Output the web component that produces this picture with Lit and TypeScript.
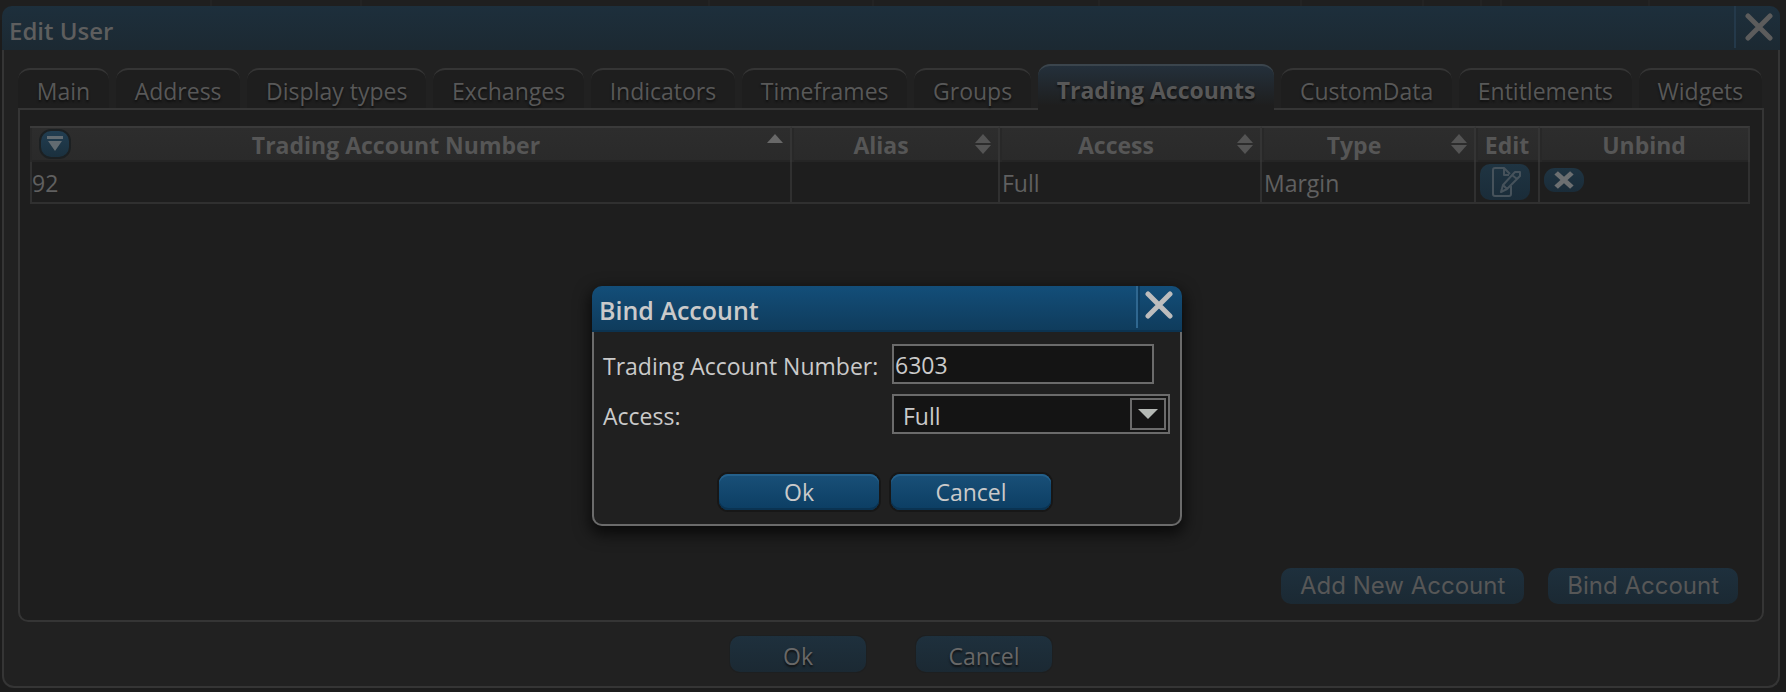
import { LitElement, html, css, svg, nothing } from "lit";
import { customElement, property, state } from "lit/decorators.js";
import { classMap } from "lit/directives/class-map.js";

const crossIcon = svg`<path d="M3 3 L25 25 M25 3 L3 25" fill="none" stroke="currentColor" stroke-width="5" stroke-linecap="round" />`;

@customElement("sort-mark")
class SortMark extends LitElement {
  static styles = css`
    :host { display: block; width: 16px; height: 20px; }
    svg { display: block; width: 16px; height: 20px; fill: #545454; }
    .on { fill: #686868; }
  `;
  @property() order = "";
  render() {
    return html`<svg viewBox="0 0 16 20" aria-hidden="true">
      ${this.order === "asc"
        ? svg`<path class="on" d="M8 0 L16 9 H0 Z" />`
        : svg`<path d="M8 0 L16 9 H0 Z" /><path d="M0 11 H16 L8 20 Z" />`}
    </svg>`;
  }
}

@customElement("account-table")
class AccountTable extends LitElement {
  static styles = css`
    :host { display: block; }
    * { box-sizing: border-box; }
    table { width: 100%; table-layout: fixed; border-collapse: separate; border-spacing: 0; }
    .alias { width: 208px; }
    .access { width: 262px; }
    .type { width: 214px; }
    .edit { width: 64px; }
    .unbind { width: 210px; }
    th {
      height: 36px; padding: 0; font-weight: 700; line-height: 34px; color: #565656;
      background: linear-gradient(#2d2d2d, #2a2a2a);
      border-top: 2px solid #3a3a3a; border-right: 2px solid #343434;
      box-shadow: inset 2px 0 #282828, inset 0 -2px #252525;
    }
    td {
      height: 42px; padding: 2px 2px 0; line-height: 38px; vertical-align: top; color: #606060;
      border-right: 2px solid #303030; border-bottom: 2px solid #303030;
    }
    td:first-child { border-left: 2px solid #303030; padding-left: 0; }
    .head { display: grid; align-items: start; justify-items: center; }
    .head > * { grid-area: 1 / 1; }
    .sortable { padding-right: 28px; }
    .plain { padding-right: 0; }
    .mark { justify-self: end; margin: 6px -21px 0 0; }
    button { display: block; padding: 0; border: 0; }
    .filter {
      justify-self: start; width: 32px; height: 30px; margin: 1px 0 0 9px; border: 2px solid #1c2022;
      border-radius: 12px; background: linear-gradient(#213d51, #1b303e); color: #626b71;
    }
    .filter svg { display: block; margin: auto; width: 16px; height: 18px; }
    .editcell { padding: 2px 0 0 4px; }
    .edit-btn {
      width: 50px; height: 36px; padding-left: 2px; border-radius: 10px; color: #46525b;
      background: linear-gradient(#1f3442, #1a2c39);
    }
    .edit-btn svg { display: block; margin: auto; width: 30px; height: 30px; }
    .unbindcell { padding: 6px 0 0 4px; }
    .unbind-btn {
      width: 40px; height: 24px; border-radius: 11px; color: #6c6f71;
      background: linear-gradient(#1f3442, #1a2c39);
    }
    .unbind-btn svg { display: block; margin: auto; width: 20px; height: 18px; }
  `;
  @property({ attribute: false }) rows: string[][] = [];

  head(label: string, order: string | null, filter = false) {
    return html`<div class="head ${order === null ? "plain" : "sortable"}">
      ${filter
        ? html`<button class="filter" aria-label="Filter"><svg viewBox="0 0 16 18" fill="currentColor" aria-hidden="true"><path d="M0 1 H16 V4 H0 Z M1 6 H15 L8 16 Z" /></svg></button>`
        : nothing}
      <span>${label}</span>
      ${order === null ? nothing : html`<sort-mark class="mark" order=${order}></sort-mark>`}
    </div>`;
  }

  render() {
    return html`<table>
      <thead>
        <tr>
          <th>${this.head("Trading Account Number", "asc", true)}</th>
          <th class="alias">${this.head("Alias", "")}</th>
          <th class="access">${this.head("Access", "")}</th>
          <th class="type">${this.head("Type", "")}</th>
          <th class="edit">${this.head("Edit", null)}</th>
          <th class="unbind">${this.head("Unbind", null)}</th>
        </tr>
      </thead>
      <tbody>
        ${this.rows.map(
          (r) => html`<tr>
            ${r.map((c) => html`<td>${c}</td>`)}
            <td class="editcell">
              <button class="edit-btn" aria-label="Edit">
                <svg viewBox="0 0 30 30" fill="none" stroke="currentColor" stroke-width="2" stroke-linejoin="round" aria-hidden="true">
                  <path d="M20 19 V27 Q20 29 18 29 H4 Q2 29 2 27 V3 Q2 1 4 1 H13 L19 7" />
                  <path d="M13 1 V8 H18" />
                  <path d="M24 5 H29 V9 L16 22 L10 25 L12 18 Z M21 8 L26 12 M12 18 L16 22" />
                </svg>
              </button>
            </td>
            <td class="unbindcell">
              <button class="unbind-btn" aria-label="Unbind">
                <svg viewBox="0 0 28 28" preserveAspectRatio="none" aria-hidden="true"><path d="M3 3 L25 25 M25 3 L3 25" fill="none" stroke="currentColor" stroke-width="7" /></svg>
              </button>
            </td>
          </tr>`
        )}
      </tbody>
    </table>`;
  }
}

@customElement("bind-dialog")
class BindDialog extends LitElement {
  static styles = css`
    :host { display: block; }
    * { box-sizing: border-box; }
    .dialog { width: 590px; border-radius: 10px; color: #cacaca; box-shadow: 0 6px 16px 2px rgba(0, 0, 0, 0.7); }
    header {
      display: flex; height: 46px; border-radius: 10px 10px 0 0;
      background: linear-gradient(#134e79, #0f3b5b); box-shadow: inset 0 -2px #0c3350;
    }
    h2 { flex: 1; margin: 0; padding: 5px 0 0 7px; font-size: 25px; line-height: 38px; font-weight: 600; }
    .close {
      width: 46px; height: 42px; padding: 0 2px 4px 0; border: 0; border-left: 2px solid #2f6790;
      background: none; color: #bdbdbd; box-shadow: inset 2px 0 #0e3c5e;
    }
    .close svg { display: block; margin: auto; width: 28px; height: 28px; }
    form {
      padding: 12px 10px 14px 9px; border: 2px solid #6b6b6b; border-top: 0;
      border-radius: 0 0 10px 10px; background: #202020;
    }
    .fields { display: grid; grid-template-columns: 289px 1fr; row-gap: 10px; }
    label { line-height: 44px; height: 40px; }
    input, select {
      height: 40px; border: 2px solid #6b6b6b; border-radius: 0; background: #141414;
      color: inherit; font: inherit; outline: 0; appearance: none;
    }
    input { width: 262px; padding: 2px 1px 0; }
    .pick { display: grid; align-items: center; width: 278px; }
    .pick > * { grid-area: 1 / 1; }
    select { width: 100%; padding: 2px 40px 0 9px; }
    .arrow {
      justify-self: end; display: grid; place-items: center; width: 36px; height: 32px;
      margin-right: 4px; border: 2px solid #6b6b6b; pointer-events: none;
    }
    .arrow svg { display: block; width: 20px; height: 10px; fill: #b4b8b4; }
    .buttons { display: flex; justify-content: center; gap: 12px; padding: 40px 3px 0 0; }
    .buttons button {
      width: 160px; height: 36px; padding: 0; border: 0; border-radius: 9px; font: inherit; line-height: 34px;
      color: inherit; background: linear-gradient(#195078, #0c3e63);
      box-shadow: 0 0 0 2px #171717, inset 0 2px #24608b, inset 0 -2px #0a3352;
    }
  `;
  render() {
    return html`<div class="dialog" role="dialog" aria-labelledby="title">
      <header>
        <h2 id="title">Bind Account</h2>
        <button class="close" aria-label="Close"><svg viewBox="0 0 28 28" aria-hidden="true">${crossIcon}</svg></button>
      </header>
      <form @submit=${(e: Event) => e.preventDefault()}>
        <div class="fields">
          <label for="number">Trading Account Number:</label>
          <input id="number" type="text" value="6303" />
          <label for="access">Access:</label>
          <div class="pick">
            <select id="access"><option>Full</option></select>
            <span class="arrow"><svg viewBox="0 0 20 10" aria-hidden="true"><path d="M0 0 H20 L10 10 Z" /></svg></span>
          </div>
        </div>
        <div class="buttons">
          <button type="submit">Ok</button>
          <button type="button">Cancel</button>
        </div>
      </form>
    </div>`;
  }
}

@customElement("app-root")
class AppRoot extends LitElement {
  static styles = css`
    :host {
      position: relative; display: flex; flex-direction: column; box-sizing: border-box;
      min-height: 100vh; padding: 6px 6px 4px 2px; overflow: hidden; background: #1c1c1c;
      color: #555; font: 400 23px/36px "Open Sans", "Noto Sans", sans-serif;
    }
    * { box-sizing: border-box; }
    .behind {
      position: absolute; inset: 0 0 auto 0; display: grid; height: 20px; background: #1f1f1f;
      grid-template-columns: 212fr 150fr 348fr 164fr 226fr 202fr 122fr 58fr 20fr 148fr 136fr;
    }
    .behind i { border-right: 2px solid #232323; }
    .behind i:last-child { border: 0; }
    .window { position: relative; flex: 1; display: flex; flex-direction: column; }
    .titlebar {
      display: flex; height: 44px; border-radius: 10px 10px 0 0;
      background: linear-gradient(#1d2f3c, #1c2932);
    }
    h1 { flex: 1; margin: 0; padding: 6px 0 0 7px; font-size: 24px; line-height: 38px; font-weight: 600; color: #5e5e5e; }
    .close {
      width: 46px; height: 42px; padding: 0 0 0 2px; border: 0; border-left: 2px solid #24394a;
      background: none; color: #5c5c5c;
    }
    .close svg { display: block; margin: auto; width: 28px; height: 28px; }
    .body {
      flex: 1; display: flex; flex-direction: column; padding: 14px 14px 0; background: #212121;
      border: 2px solid #353535; border-top: 0; border-radius: 0 0 12px 12px;
    }
    .tabs { display: flex; align-items: flex-end; gap: 7px; padding-right: 2px; }
    .tab {
      position: relative; flex: 1 1 auto; height: 40px; padding: 0 12px; border: 0;
      border-top: 2px solid #353535; border-radius: 12px 12px 0 0; background: #1e1e1e; color: #585858;
      font: inherit; line-height: 38px; padding-top: 2px; text-shadow: 0 2px 2px #111;
    }
    .active {
      height: 46px; margin-bottom: -2px; padding-top: 4px; border-top-color: #3b454d; font-weight: 700;
      line-height: 36px; background: linear-gradient(#24303b, #1e1e1e 90%); z-index: 1;
    }
    .panel {
      flex: 1; display: flex; flex-direction: column; justify-content: space-between;
      padding: 16px 12px 16px 10px; background: #1e1e1e; border: 2px solid #353535; border-radius: 0 0 10px 10px;
    }
    .actions { display: flex; justify-content: flex-end; gap: 24px; padding-right: 12px; }
    .btn {
      height: 36px; padding: 0 19px; border: 0; border-radius: 10px; font: inherit; line-height: 36px;
      color: #575757; background: linear-gradient(#1e303d, #1b2933);
    }
    .wide { font-family: Inter, sans-serif; font-size: 24px; }
    .footer { display: flex; justify-content: center; gap: 50px; padding: 14px 0; }
    .footer .btn { width: 136px; padding-top: 2px; color: #686868; box-shadow: 0 0 0 1px #1d1f20; text-shadow: 0 2px 2px #111; }
    .modal {
      position: absolute; inset: 0; display: flex; justify-content: center; align-items: center;
      padding: 120px 12px 0 0;
    }
  `;
  @state() tab = "Trading Accounts";
  tabs = ["Main", "Address", "Display types", "Exchanges", "Indicators", "Timeframes", "Groups",
    "Trading Accounts", "CustomData", "Entitlements", "Widgets"];
  rows = [["92", "", "Full", "Margin"]];

  render() {
    return html`
      <div class="behind" aria-hidden="true">${Array.from({ length: 11 }, () => html`<i></i>`)}</div>
      <section class="window">
        <div class="titlebar">
          <h1>Edit User</h1>
          <button class="close" aria-label="Close"><svg viewBox="0 0 28 28" aria-hidden="true">${crossIcon}</svg></button>
        </div>
        <div class="body">
          <div class="tabs" role="tablist">
            ${this.tabs.map(
              (t) => html`<button role="tab" aria-selected=${t === this.tab}
                class=${classMap({ tab: true, active: t === this.tab })}
                @click=${() => (this.tab = t)}>${t}</button>`
            )}
          </div>
          <div class="panel">
            <account-table .rows=${this.rows}></account-table>
            <div class="actions">
              <button class="btn wide">Add New Account</button>
              <button class="btn wide">Bind Account</button>
            </div>
          </div>
          <div class="footer">
            <button class="btn">Ok</button>
            <button class="btn">Cancel</button>
          </div>
        </div>
      </section>
      <div class="modal"><bind-dialog></bind-dialog></div>
    `;
  }
}
